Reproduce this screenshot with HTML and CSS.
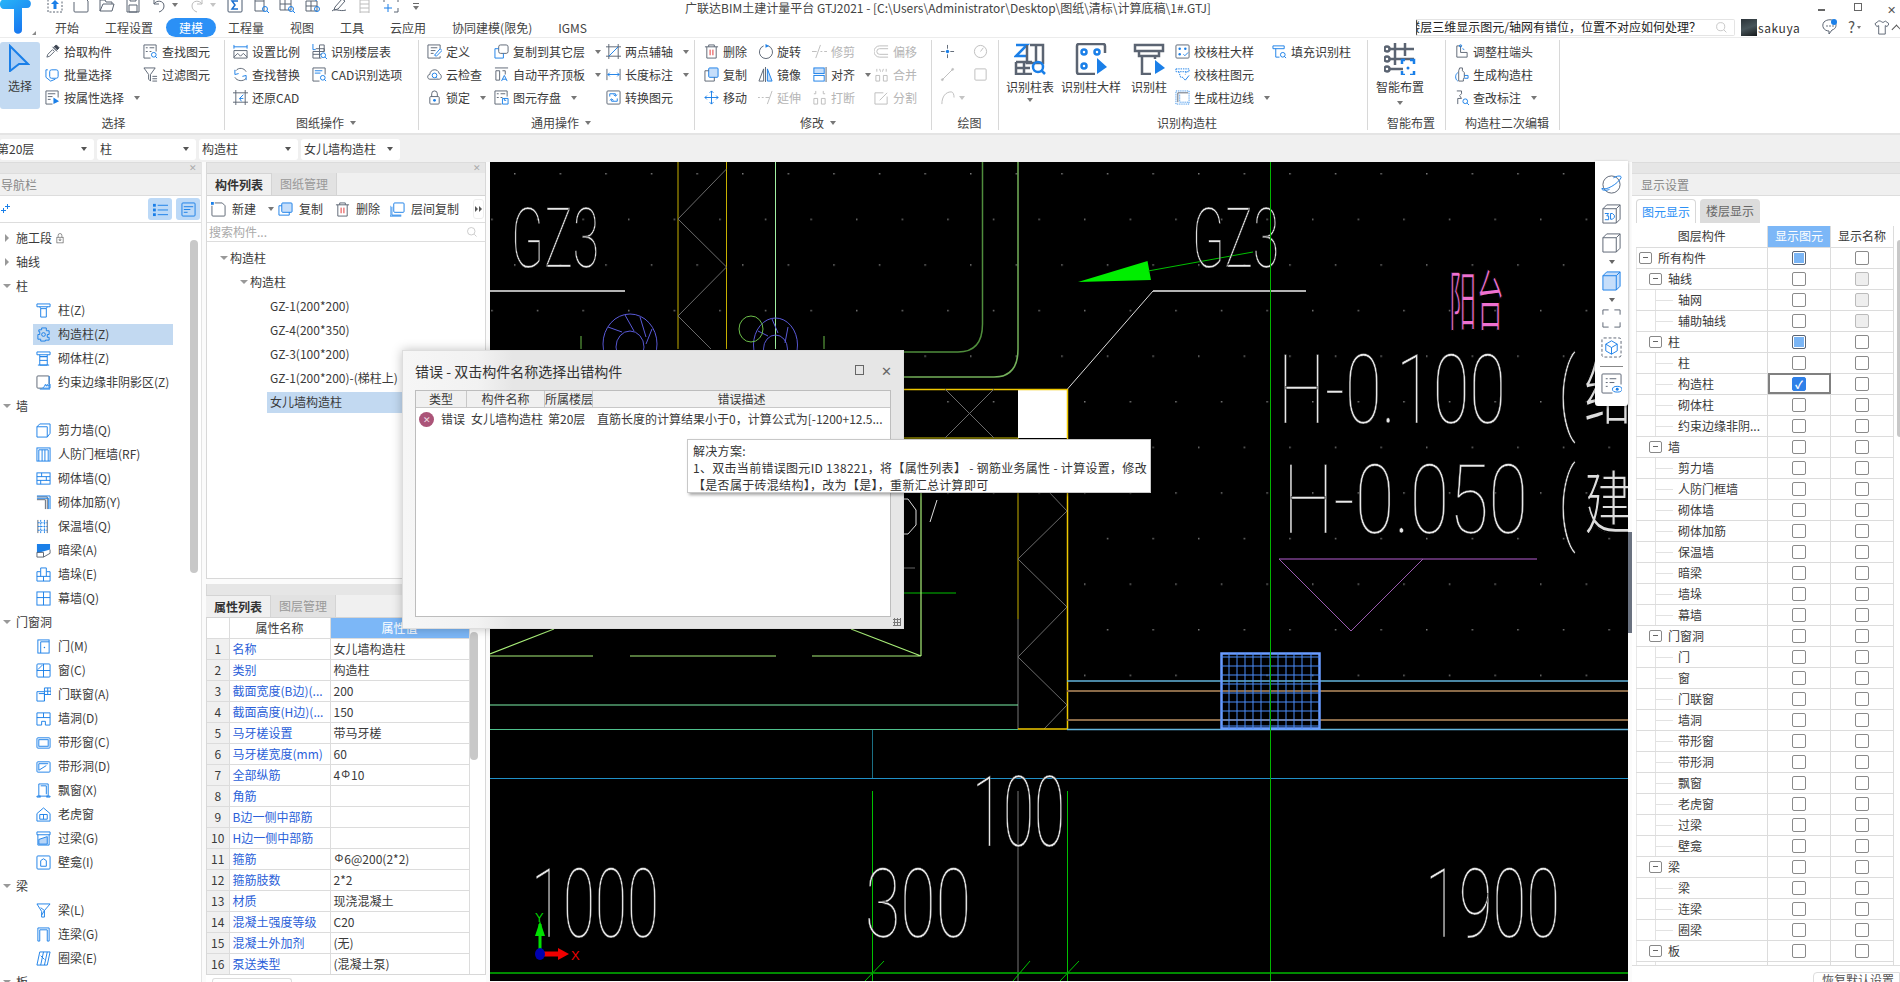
FILE: index.html
```html
<!DOCTYPE html>
<html lang="zh-CN">
<head>
<meta charset="utf-8">
<title>广联达BIM土建计量平台 GTJ2021</title>
<link rel="stylesheet" href="styles.css">
</head>
<body>
<svg class="sprite" xmlns="http://www.w3.org/2000/svg">
<defs><linearGradient id="lg-logo" x1="0" y1="0" x2="0.600" y2="1"><stop class="st1" offset="0"/><stop class="st2" offset="1"/></linearGradient></defs>
<symbol id="q-imp" viewBox="0 0 16 16"><path d="M1 1h14v14H1z" stroke-dasharray="2 1.5"/><path class="bf" d="M8 3l4 4H9.500v5h-3V7H4z"/></symbol>
<symbol id="q-new" viewBox="0 0 16 16"><path d="M5 1h7l3 3v10a1 1 0 0 1-1 1H2a1 1 0 0 1-1-1V5"/><path class="bf" d="M1 0h3v3H1z"/></symbol>
<symbol id="q-open" viewBox="0 0 16 16"><path d="M1 14V3h5l1 2h6v2M1 14l3-7h11l-2 7z"/></symbol>
<symbol id="q-save" viewBox="0 0 16 16"><path d="M2 1h12v14H2zM5 1v3h6V1M4 8h8v7H4z"/></symbol>
<symbol id="q-undo" viewBox="0 0 16 16"><path d="M3 2v5h5M3 7c2-4 10-4 10 2 0 3-2 5-5 6"/></symbol>
<symbol id="q-redo" viewBox="0 0 16 16"><path class="g" d="M13 2v5H8M13 7C11 3 3 3 3 9c0 3 2 5 5 6"/></symbol>
<symbol id="q-sum" viewBox="0 0 16 16"><rect class="ds" x="1" y="1" width="14" height="14" rx="1"/><path class="dbs" d="M11 4H5l3 4-3 4h6"/></symbol>
<symbol id="q-tb1" viewBox="0 0 16 16"><path d="M2 1h9v13H2zM2 4h9"/><path class="b" d="M3 2.500h7"/><circle class="b" cx="12" cy="12" r="2.500"/><path class="b" d="M14 14l2 2"/></symbol>
<symbol id="q-tb2" viewBox="0 0 16 16"><path d="M1 2h11v11H1zM1 7h11M6 2v11"/><circle class="b" cx="12" cy="12" r="2.500"/><path class="b" d="M14 14l2 2"/></symbol>
<symbol id="q-tb3" viewBox="0 0 16 16"><path d="M1 4h11v10H1zM1 9h11M6 4v10"/><path class="b" d="M5 1h6v3"/><circle class="b" cx="12" cy="12" r="2.500"/></symbol>
<symbol id="q-pen" viewBox="0 0 16 16"><path d="M1 14c3-3 8 1 14-1M4 10l7-8 3 2-7 8-4 1z"/></symbol>
<symbol id="q-lad" viewBox="0 0 16 16"><path class="g" d="M3 0v16M12 0v16M3 3h9M3 7h9M3 11h9M3 15h9"/></symbol>
<symbol id="q-scan" viewBox="0 0 16 16"><path d="M1 5V1h4M11 1h4v4M15 11v4h-4"/><path class="b" d="M1 11h8M5 7v8"/></symbol>

<symbol id="r-pick" viewBox="0 0 16 16"><path d="M2 14l1-3 5-5 2 2-5 5zM8 3l5 5M11 2l3 3-2 2-3-3z"/><path class="k" d="M10 3l2-2 3 3-2 2z"/></symbol>
<symbol id="r-batch" viewBox="0 0 16 16"><rect class="b" x="5" y="3" width="9" height="9" rx="2"/><path class="b" d="M3 3H1v8l5 4 5-2"/></symbol>
<symbol id="r-attr" viewBox="0 0 16 16"><path d="M14 8V1H1v14h7M3 4h8M3 7h5M3 10h3"/><path class="bf" d="M9 8l6 4-6 3z"/></symbol>
<symbol id="r-find" viewBox="0 0 16 16"><path d="M14 8V1H1v14h7M3 4h2M7 4h5M3 8h2M7 8h2"/><circle class="b" cx="11.500" cy="11.500" r="2.500"/><path class="b" d="M13 13l2 2"/></symbol>
<symbol id="r-filter" viewBox="0 0 16 16"><path d="M1 1h12L8 8v7l-2-2V8zM10 10h5M10 12.500h5M10 15h5"/></symbol>
<symbol id="r-scale" viewBox="0 0 16 16"><path class="b" d="M1 1v4M15 1v4M1 3h14"/><path d="M1 7h14v8H1zM1 14l4-4 3 3 3-3 4 4"/></symbol>
<symbol id="r-floor" viewBox="0 0 16 16"><path class="b" d="M1 0v6h3"/><path d="M4 5h9v3H1v7h9M8 1h5v7M8 1v14M1 11h9"/><circle class="b" cx="12" cy="12" r="2.500"/><path class="b" d="M14 14l2 2"/></symbol>
<symbol id="r-rep" viewBox="0 0 16 16"><path d="M3 4C6 0 12 1 14 5M2 11c2 4 9 5 12 1"/><path class="b" d="M2 3v5l4-1M14 14v-5l-4 1"/></symbol>
<symbol id="r-cad" viewBox="0 0 16 16"><path d="M14 8V1H1v14h7"/><path class="b" d="M3 4h8M3 6.500h6"/><circle class="b" cx="11.500" cy="11.500" r="2.500"/><path class="b" d="M13 13l2 2"/></symbol>
<symbol id="r-res" viewBox="0 0 16 16"><path d="M3 0v16M13 0v16M0 3h16M0 13h16"/><path class="b" d="M11 5L7 9h4M7 9l2 3"/></symbol>
<symbol id="r-def" viewBox="0 0 16 16"><path d="M14 5V1H1v14h13v-2M4 4h7M4 7h5M4 10h3"/><path class="b" d="M8 12l6-7 2 2-6 6z"/></symbol>
<symbol id="r-cloud" viewBox="0 0 16 16"><path d="M3 13c-3 0-3-5 0-5 0-6 9-7 10-1 3 1 3 6 0 6z"/><circle class="b" cx="8" cy="9" r="2.500"/><path class="b" d="M10 11l1 1"/></symbol>
<symbol id="r-lock" viewBox="0 0 16 16"><path d="M5 7V4a3 3 0 0 1 6 0v3"/><rect x="3" y="7" width="10" height="8" rx="1"/><circle class="bf" cx="8" cy="11" r="1.500"/></symbol>
<symbol id="r-cpy" viewBox="0 0 16 16"><rect x="5" y="1" width="10" height="9" rx="2"/><path class="b" d="M5 5H1v10h9v-5"/></symbol>
<symbol id="r-alg" viewBox="0 0 16 16"><path d="M1 1h14M2 4h4v10H2zM9 4h3v4"/><path class="b" d="M8 15l3-6 3 6M9 13h4"/></symbol>
<symbol id="r-sav" viewBox="0 0 16 16"><path d="M14 7V1H1v14h7M3 4h2M7 4h5M3 8h2M7 8h2"/><path class="b" d="M9 9h6v6H9zM11 9v2h2"/></symbol>
<symbol id="r-2pt" viewBox="0 0 16 16"><path d="M3 0v16M13 0v16M0 3h16M0 13h16"/><path class="b" d="M3 13L13 3"/></symbol>
<symbol id="r-len" viewBox="0 0 16 16"><path d="M1 2v12M15 2v12"/><path class="b" d="M2 8h12M4 6L2 8l2 2M12 6l2 2-2 2"/></symbol>
<symbol id="r-conv" viewBox="0 0 16 16"><rect x="1" y="1" width="14" height="14" rx="1"/><path class="b" d="M4 7V4h6v2M12 9v3H6v-2M8 5l2 1.500L12 5M4 11l2-1.500L8 11"/></symbol>
<symbol id="r-del" viewBox="0 0 16 16"><path d="M1 3h14M5 3V1h6v2M3 3v12h10V3"/><path class="r" d="M6.500 6v6M9.500 6v6"/></symbol>
<symbol id="r-copy" viewBox="0 0 16 16"><rect class="b lf" x="5" y="1" width="10" height="10" rx="1"/><path d="M5 4H1v11h10v-4"/></symbol>
<symbol id="r-move" viewBox="0 0 16 16"><path class="b" d="M8 1v14M1 8h14M6 3l2-2 2 2M6 13l2 2 2-2M3 6L1 8l2 2M13 6l2 2-2 2"/></symbol>
<symbol id="r-rot" viewBox="0 0 16 16"><path d="M6 2a7 7 0 1 0 5 0"/><path class="bf" d="M8 0l4 2-4 2z"/></symbol>
<symbol id="r-mir" viewBox="0 0 16 16"><path d="M8 0v16M6 2L1 15h5z"/><path class="b lf" d="M10 2l5 13h-5z"/></symbol>
<symbol id="r-ali" viewBox="0 0 16 16"><rect class="b lf" x="2" y="1" width="11" height="6"/><rect class="b" x="2" y="9" width="11" height="6"/><path d="M15 0v16"/></symbol>
<symbol id="r-trim" viewBox="0 0 16 16"><path class="g" d="M4 15L9 1M0 8h5M9 8h2M13 8h3"/></symbol>
<symbol id="r-ext" viewBox="0 0 16 16"><path class="g" d="M0 8h2M4 8h2M8 8h4M10 15l5-14"/></symbol>
<symbol id="r-brk" viewBox="0 0 16 16"><path class="g" d="M2 9h4v6H2zM10 9h4v6h-4zM4 1v3M12 1v3M2 4h2M12 4h2"/></symbol>
<symbol id="r-off" viewBox="0 0 16 16"><path class="g" d="M15 2H6a6 6 0 0 0 0 12h9M15 5H6a3 3 0 0 0 0 6h9"/></symbol>
<symbol id="r-mrg" viewBox="0 0 16 16"><path class="g" d="M2 9h4v6H2zM10 9h4v6h-4zM3 2v3M13 2v3M6 2l1 3M10 2L9 5"/></symbol>
<symbol id="r-spl" viewBox="0 0 16 16"><path class="g" d="M10 3H1v12h13V7M6 11l8-8"/></symbol>
<symbol id="r-pt" viewBox="0 0 16 16"><path d="M8 1v4M8 11v4M1 8h4M11 8h4"/><circle class="bf" cx="8" cy="8" r="1.800"/></symbol>
<symbol id="r-clk" viewBox="0 0 16 16"><circle class="g" cx="8" cy="8" r="6.500"/><path class="g" d="M8 8l3-4"/></symbol>
<symbol id="r-ln" viewBox="0 0 16 16"><path class="g" d="M2 14L14 2"/><circle class="g" cx="2.500" cy="13.500" r="1"/><circle class="g" cx="13.500" cy="2.500" r="1"/></symbol>
<symbol id="r-sq" viewBox="0 0 16 16"><rect class="g" x="2" y="2" width="12" height="12" rx="1"/></symbol>
<symbol id="r-arc" viewBox="0 0 16 16"><path class="g" d="M2 15C2 7 6 2 12 2c2 0 3 3 3 6"/></symbol>
<symbol id="r-chk" viewBox="0 0 16 16"><rect x="1" y="1" width="14" height="14" rx="1"/><g class="bf"><circle cx="5" cy="5" r="1.300"/><circle cx="11" cy="5" r="1.300"/><circle cx="5" cy="11" r="1.300"/></g><path class="b" d="M9 11l1.500 1.500L14 9"/></symbol>
<symbol id="r-cel" viewBox="0 0 16 16"><path class="b" d="M1 2h14v3H1zM4 5l2 6h3M12 5l-1 3" stroke-dasharray="1.500 1"/><path class="b" d="M9 12l2 2 4-5"/></symbol>
<symbol id="r-edg" viewBox="0 0 16 16"><path d="M3 3h11M3 3v10"/><path class="b" d="M1 1h14v14H1z" stroke-dasharray="1 1"/><path class="b" d="M5 13h10M5 5v8" stroke-dasharray="1 1"/></symbol>
<symbol id="r-fil" viewBox="0 0 16 16"><path class="b" d="M1 2h12v3H1zM4 5v9h4"/><circle class="b" cx="11.500" cy="11.500" r="2.500"/><path class="b" d="M13 13l2 2"/></symbol>
<symbol id="r-adj" viewBox="0 0 16 16"><path d="M3 14V2h4v7h7v5z"/><circle class="b" cx="7" cy="2" r="1.200"/><path class="b" d="M9 5l2 1"/></symbol>
<symbol id="r-gen" viewBox="0 0 16 16"><path d="M6 1h3v3l2 2v5l-1 2v2H5V4z"/><path class="b" d="M4 6c-3 2-3 7 0 9M11 9h4v3h-4"/></symbol>
<symbol id="r-lbl" viewBox="0 0 16 16"><path d="M3 1h5v3L6 6l2 3H4v6"/><circle class="b" cx="12" cy="12" r="2.500"/><path class="b" d="M14 14l2 2"/></symbol>

<symbol id="b-tab" viewBox="0 0 32 32"><path class="bw" d="M2 2h11L2 13h11" /><g class="bg"><path d="M16 2h13v18H13V2M22 2v18M2 19h16M2 19v12h16M10 19v12M2 25h14"/></g><circle class="bw" cx="24" cy="24" r="5"/><path class="bw" d="M27 27l4 4"/></symbol>
<symbol id="b-det" viewBox="0 0 32 32"><path class="bg" d="M30 10V3a2 2 0 0 0-2-2H4a2 2 0 0 0-2 2v26a2 2 0 0 0 2 2h16"/><g class="bw"><circle cx="9" cy="9" r="2.500"/><circle cx="22" cy="9" r="2.500"/><circle cx="9" cy="23" r="2.500"/></g><path class="bf" d="M22 15l10 9-10 7z"/></symbol>
<symbol id="b-col" viewBox="0 0 32 32"><path class="bg" d="M2 2h28v6H2zM6 8v5h20V8M9 13v18h9M22 13v3"/><path class="bf" d="M22 17l10 8-10 6z"/></symbol>
<symbol id="b-smart" viewBox="0 0 32 32"><g class="bg"><path d="M11 0v22M21 0v13M6 6h24M6 16h24M6 26h13"/><circle cx="3" cy="6" r="2.500"/><circle cx="3" cy="16" r="2.500"/><circle cx="3" cy="26" r="2.500"/></g><path class="bw" d="M21 17h-3v4M30 21v-4h-4M26 32h4v-4M18 28v4h3"/><circle class="bf" cx="24" cy="25" r="1.500"/></symbol>
<symbol id="b-sel" viewBox="0 0 22 28"><path class="cur" d="M2 2l18 18-9 0-9 7z"/></symbol>

<symbol id="n-col" viewBox="0 0 16 16"><path class="b" d="M1 1h14v3H1zM4 4l1 2h6l1-2M5 6v9h6V6"/></symbol>
<symbol id="n-gz" viewBox="0 0 16 16"><path class="b" d="M6 1h5v3h3v4h-2v3h2v3h-4v1H5v-2H2V8h2V5H3V3h3z"/><circle class="b" cx="8" cy="8" r="2"/></symbol>
<symbol id="n-zt" viewBox="0 0 16 16"><path class="b" d="M1 1h14v3H1zM4 4v2h8V4M4 6h8v9H4zM4 10h8M2 15h12"/></symbol>
<symbol id="n-ys" viewBox="0 0 16 16"><path d="M14 10V2a1 1 0 0 0-1-1H2a1 1 0 0 0-1 1v11a1 1 0 0 0 1 1h5"/><path class="b" d="M7 14h8v-4l-2 2-1-2-1 2-1-2-1 2z M14 1v13M4 15h11"/></symbol>
<symbol id="n-jl" viewBox="0 0 16 16"><path class="b" d="M1 4h11v11H1zM1 4l3-3h11v10l-3 4"/></symbol>
<symbol id="n-rf" viewBox="0 0 16 16"><rect class="b" x="1" y="1" width="14" height="14"/><path class="b" d="M3 3h10v12M3 3v12M6.500 3v12M9.500 3v12"/></symbol>
<symbol id="n-qq" viewBox="0 0 16 16"><rect class="b" x="1" y="2" width="14" height="12"/><path class="b" d="M1 6h14M1 10h14M6 2v4M11 6v4M5 10v4"/></symbol>
<symbol id="n-mq" viewBox="0 0 16 16"><rect class="b" x="1" y="1" width="14" height="14"/><path class="b" d="M1 7h14M8 1v14"/></symbol>
<symbol id="n-jj" viewBox="0 0 16 16"><path d="M1 5h9M10 5v10M1 2h11v13"/><path class="b" d="M1 3.500h12.500V15M15 1v14M1 1h14"/></symbol>
<symbol id="n-bw" viewBox="0 0 16 16"><path d="M2 1v14M12 1v14"/><path class="b" d="M5 1v14M9 1v14M2 4h10M2 8h10M2 12h10" stroke-dasharray="2 1"/></symbol>
<symbol id="n-al" viewBox="0 0 16 16"><path class="bf" d="M1 1h14v6L1 11z"/><path d="M1 10h7v5H1zM8 15l7-4V7"/></symbol>
<symbol id="n-qd" viewBox="0 0 16 16"><path class="b" d="M1 5h4V1h6v4h4v10H1zM5 5v5M11 5v5M1 10h14M8 10v5"/></symbol>
<symbol id="n-door" viewBox="0 0 16 16"><rect class="b" x="2" y="1" width="12" height="14"/><path class="b" d="M5 3h9M5 3v12"/><circle class="bf" cx="9" cy="9" r=".8"/></symbol>
<symbol id="n-win" viewBox="0 0 16 16"><rect class="b" x="1" y="1" width="14" height="14" rx="1"/><path class="b" d="M1 8h14M8 1v14M2 7l5-5"/></symbol>
<symbol id="n-lc" viewBox="0 0 16 16"><path class="b" d="M1 5h8v10H1zM3 7h6v8M9 5V1h7v7H9M12.500 1v7M9 4.500h7"/></symbol>
<symbol id="n-qdg" viewBox="0 0 16 16"><path class="b" d="M1 15V2h14v13h-5v-4H6v4zM1 7h14M8 2v5"/></symbol>
<symbol id="n-dxc" viewBox="0 0 16 16"><rect class="b" x="1" y="3" width="14" height="11" rx="1"/><rect class="b" x="3" y="5" width="10" height="7"/></symbol>
<symbol id="n-dxd" viewBox="0 0 16 16"><rect class="b" x="1" y="3" width="14" height="11" rx="1"/><path class="b" d="M3 12V5h10M3 12l8-5"/></symbol>
<symbol id="n-pc" viewBox="0 0 16 16"><path class="b" d="M3 1h10v13H3zM1 14h4M11 14h4M1 14v1h4M11 15h4v-1M5 3h6v9"/></symbol>
<symbol id="n-lh" viewBox="0 0 16 16"><path class="b" d="M8 1l7 6v8H1V7zM4 8h8v5H4zM8 8v5"/></symbol>
<symbol id="n-gl" viewBox="0 0 16 16"><path class="b" d="M1 1h14v3H1zM2 4v11h12V4"/><path class="bl" d="M3 14V9l9-3v8z"/></symbol>
<symbol id="n-bk" viewBox="0 0 16 16"><rect class="b" x="1" y="1" width="14" height="14" rx="1"/><path class="b" d="M5 12V6l3-2 3 2v6z"/></symbol>
<symbol id="n-l" viewBox="0 0 16 16"><path class="b" d="M1 1l14 0-6 7v7H6V9L1 1M5 5l4 3M6 13l3-5"/></symbol>
<symbol id="n-ll" viewBox="0 0 16 16"><path class="b" d="M2 15V1h12v14h-2V3H4v12z"/></symbol>
<symbol id="n-ql" viewBox="0 0 16 16"><path class="b" d="M4 1h11l-3 14H1zM5 5l4 4M8 1L5 15M12 1L9 15"/></symbol>

<symbol id="t-pin" viewBox="0 0 10 10"><path class="b" d="M6.500 0v5M4 2.500h5M2.500 4v5M0 6.500h5"/></symbol>
<symbol id="t-new" viewBox="0 0 16 16"><path d="M4 1h8l3 3v10a1 1 0 0 1-1 1H2a1 1 0 0 1-1-1V4"/><path class="bf" d="M0 0h3v3H0z"/></symbol>
<symbol id="t-cp2" viewBox="0 0 16 16"><rect class="b lf" x="4" y="1" width="11" height="10" rx="1"/><path class="b" d="M4 4H1v10h11v-3"/></symbol>
<symbol id="t-fl" viewBox="0 0 16 16"><rect class="b" x="4" y="1" width="11" height="10" rx="1"/><path class="b" d="M2 5v9h10M0 4v11h12"/></symbol>
<symbol id="t-list" viewBox="0 0 16 16"><g class="bf"><rect x="0" y="2" width="3" height="3"/><rect x="0" y="7" width="3" height="3"/><rect x="0" y="12" width="3" height="3"/></g><path class="b" d="M5 3.500h11M5 8.500h11M5 13.500h11"/></symbol>
<symbol id="t-det" viewBox="0 0 16 16"><rect class="b" x="1" y="1" width="14" height="14" rx="1"/><path class="b" d="M3 5h10M3 8h7M3 11h4"/></symbol>
<symbol id="s-glob" viewBox="0 0 22 22"><ellipse cx="11" cy="11" rx="9" ry="9"/><path class="b" d="M1 15C5 18 18 10 21 4c1-3-5-2-8 0M1 15c-1 2 4 3 8 1"/></symbol>
<symbol id="s-3d" viewBox="0 0 22 22"><path d="M2 6l4-4h14v15l-4 4H2zM2 6h14v15M16 6l4-4"/><path class="b" d="M4 11h4l-2 2.500h2v4H4M10 11h2l2 2v2l-2 2h-2z"/></symbol>
<symbol id="s-box" viewBox="0 0 22 22"><path d="M2 6l4-4h14v15l-4 4H2zM2 6h14v15M16 6l4-4"/></symbol>
<symbol id="s-boxb" viewBox="0 0 22 22"><path class="b lf" d="M2 6l4-4h14v15l-4 4H2z"/><path class="b" d="M2 6h14v15M16 6l4-4"/></symbol>
<symbol id="s-fr" viewBox="0 0 22 22"><path d="M2 7V2h6M14 2h6v5M20 15v5h-6M8 20H2v-5"/></symbol>
<symbol id="s-cube" viewBox="0 0 22 22"><rect x="1" y="1" width="20" height="20" rx="2" stroke-dasharray="3 2"/><path class="b" d="M11 4l6 3.500v7L11 18l-6-3.500v-7zM5 7.500L11 11l6-3.500M11 11v7"/></symbol>
<symbol id="s-eye" viewBox="0 0 22 22"><path d="M21 12V2a1 1 0 0 0-1-1H2a1 1 0 0 0-1 1v18a1 1 0 0 0 1 1h10M5 6h2M9 6h7M5 10h2M9 10h5M5 14h2"/><ellipse class="b" cx="17" cy="17" rx="5" ry="3"/><circle class="bf" cx="17" cy="17" r="1.500"/></symbol>
<symbol id="h-chat" viewBox="0 0 16 16"><path d="M2 3c3-3 9-3 11 0 2 3 1 7-3 8l-3 4v-3C2 12-1 7 2 3z"/><circle class="bf" cx="12" cy="3" r="3"/><g class="bfd"><circle cx="5" cy="7" r=".8"/><circle cx="8" cy="7" r=".8"/><circle cx="11" cy="7" r=".8"/></g></symbol>
<symbol id="h-shirt" viewBox="0 0 16 16"><path d="M5 1L1 4l2 3 2-1v9h7V6l2 1 2-3-4-3c-1 2-4 2-5 0z"/></symbol>
<symbol id="m-search" viewBox="0 0 16 16"><circle class="g" cx="7" cy="7" r="5"/><path class="g" d="M11 11l3 3"/></symbol>
<symbol id="m-lock" viewBox="0 0 16 16"><path d="M5 6V3a3 3 0 0 1 6 0v3"/><rect x="3" y="6" width="10" height="9"/><circle cx="8" cy="10" r="1.500"/></symbol>
</svg>

<div class="app">
  <header class="head">
    <div class="logo">
      <svg class="logo-svg" viewBox="0 0 42 38"><path class="logo-t" d="M2 0h26c4 0 4 8-1 8h-5v22c0 5-8 5-8 0V9H4C-1 9-1 1 2 0z"/><path class="logo-c" d="M36 31l-4 4h4z"/></svg>
    </div>
    <div class="head-main">
      <div class="qa">
        <div class="qa-icons">
          <svg class="ic"><use href="#q-imp"/></svg>
          <svg class="ic"><use href="#q-new"/></svg>
          <svg class="ic"><use href="#q-open"/></svg>
          <svg class="ic"><use href="#q-save"/></svg>
          <span class="qa-pair"><svg class="ic"><use href="#q-undo"/></svg><i class="car"></i></span>
          <span class="qa-pair"><svg class="ic"><use href="#q-redo"/></svg><i class="car lt"></i></span>
          <svg class="ic"><use href="#q-sum"/></svg>
          <svg class="ic"><use href="#q-tb1"/></svg>
          <svg class="ic"><use href="#q-tb2"/></svg>
          <svg class="ic"><use href="#q-tb3"/></svg>
          <svg class="ic"><use href="#q-pen"/></svg>
          <svg class="ic"><use href="#q-lad"/></svg>
          <svg class="ic"><use href="#q-scan"/></svg>
          <span class="qa-more"><b></b><i class="car"></i></span>
        </div>
        <div class="title">广联达BIM土建计量平台 GTJ2021 - [C:\Users\Administrator\Desktop\图纸\清标\计算底稿\1#.GTJ]</div>
        <div class="win"><span class="w-min"></span><span class="w-res"></span><span class="w-x">✕</span></div>
      </div>
      <div class="tabbar">
        <nav class="tabs">
          <a>开始</a><a>工程设置</a><a class="on">建模</a><a>工程量</a><a>视图</a><a>工具</a><a>云应用</a><a>协同建模(限免)</a><a>IGMS</a>
        </nav>
        <div class="hsearch"><span class="hs-text">楼层三维显示图元/轴网有错位，位置不对应如何处理？</span><svg class="ic hs-ic"><use href="#m-search"/></svg></div>
        <div class="avatar"></div>
        <span class="user">sakuya</span>
        <svg class="ic h-i"><use href="#h-chat"/></svg>
        <span class="help">?<i class="car"></i></span>
        <svg class="ic h-s"><use href="#h-shirt"/></svg>
        <span class="collapse"></span>
      </div>
    </div>
  </header>

  <div class="ribbon">
    <section class="rg g1">
      <div class="rb">
        <div class="bigsel"><svg class="ic-sel"><use href="#b-sel"/></svg><span>选择</span></div>
        <div class="col c98">
          <div class="ri"><svg class="ic"><use href="#r-pick"/></svg>拾取构件</div>
          <div class="ri"><svg class="ic"><use href="#r-batch"/></svg>批量选择</div>
          <div class="ri"><svg class="ic"><use href="#r-attr"/></svg>按属性选择<i class="car m5"></i></div>
        </div>
        <div class="col">
          <div class="ri"><svg class="ic"><use href="#r-find"/></svg>查找图元</div>
          <div class="ri"><svg class="ic"><use href="#r-filter"/></svg>过滤图元</div>
        </div>
      </div>
      <div class="rl">选择</div>
    </section>
    <section class="rg g2">
      <div class="rb">
        <div class="col c79">
          <div class="ri"><svg class="ic"><use href="#r-scale"/></svg>设置比例</div>
          <div class="ri"><svg class="ic"><use href="#r-rep"/></svg>查找替换</div>
          <div class="ri"><svg class="ic"><use href="#r-res"/></svg>还原CAD</div>
        </div>
        <div class="col">
          <div class="ri"><svg class="ic"><use href="#r-floor"/></svg>识别楼层表</div>
          <div class="ri"><svg class="ic"><use href="#r-cad"/></svg>CAD识别选项</div>
        </div>
      </div>
      <div class="rl">图纸操作<i class="car m5"></i></div>
    </section>
    <section class="rg g3">
      <div class="rb">
        <div class="col c67">
          <div class="ri"><svg class="ic"><use href="#r-def"/></svg>定义</div>
          <div class="ri"><svg class="ic"><use href="#r-cloud"/></svg>云检查</div>
          <div class="ri"><svg class="ic"><use href="#r-lock"/></svg>锁定<i class="car m5"></i></div>
        </div>
        <div class="col c112">
          <div class="ri"><svg class="ic"><use href="#r-cpy"/></svg>复制到其它层<i class="car m5"></i></div>
          <div class="ri"><svg class="ic"><use href="#r-alg"/></svg>自动平齐顶板<i class="car m5"></i></div>
          <div class="ri"><svg class="ic"><use href="#r-sav"/></svg>图元存盘<i class="car m5"></i></div>
        </div>
        <div class="col">
          <div class="ri"><svg class="ic"><use href="#r-2pt"/></svg>两点辅轴<i class="car m5"></i></div>
          <div class="ri"><svg class="ic"><use href="#r-len"/></svg>长度标注<i class="car m5"></i></div>
          <div class="ri"><svg class="ic"><use href="#r-conv"/></svg>转换图元</div>
        </div>
      </div>
      <div class="rl">通用操作<i class="car m5"></i></div>
    </section>
    <section class="rg g4">
      <div class="rb">
        <div class="col c54">
          <div class="ri"><svg class="ic"><use href="#r-del"/></svg>删除</div>
          <div class="ri"><svg class="ic"><use href="#r-copy"/></svg>复制</div>
          <div class="ri"><svg class="ic"><use href="#r-move"/></svg>移动</div>
        </div>
        <div class="col c54">
          <div class="ri"><svg class="ic"><use href="#r-rot"/></svg>旋转</div>
          <div class="ri"><svg class="ic"><use href="#r-mir"/></svg>镜像</div>
          <div class="ri dim"><svg class="ic"><use href="#r-ext"/></svg>延伸</div>
        </div>
        <div class="col c62">
          <div class="ri dim"><svg class="ic"><use href="#r-trim"/></svg>修剪</div>
          <div class="ri"><svg class="ic"><use href="#r-ali"/></svg>对齐<i class="car m5"></i></div>
          <div class="ri dim"><svg class="ic"><use href="#r-brk"/></svg>打断</div>
        </div>
        <div class="col">
          <div class="ri dim"><svg class="ic"><use href="#r-off"/></svg>偏移</div>
          <div class="ri dim"><svg class="ic"><use href="#r-mrg"/></svg>合并</div>
          <div class="ri dim"><svg class="ic"><use href="#r-spl"/></svg>分割</div>
        </div>
      </div>
      <div class="rl">修改<i class="car m5"></i></div>
    </section>
    <section class="rg g5">
      <div class="rb">
        <div class="col c33">
          <div class="ri"><svg class="ic"><use href="#r-pt"/></svg></div>
          <div class="ri"><svg class="ic"><use href="#r-ln"/></svg></div>
          <div class="ri"><svg class="ic"><use href="#r-arc"/></svg><i class="car lt"></i></div>
        </div>
        <div class="col">
          <div class="ri"><svg class="ic"><use href="#r-clk"/></svg></div>
          <div class="ri"><svg class="ic"><use href="#r-sq"/></svg></div>
        </div>
      </div>
      <div class="rl">绘图</div>
    </section>
    <section class="rg g6">
      <div class="rb">
        <div class="bigb w48"><svg class="ic32"><use href="#b-tab"/></svg><span>识别柱表</span><i class="car"></i></div>
        <div class="bigb w60"><svg class="ic32"><use href="#b-det"/></svg><span>识别柱大样</span></div>
        <div class="bigb w36"><svg class="ic32"><use href="#b-col"/></svg><span>识别柱</span></div>
        <div class="col c97">
          <div class="ri"><svg class="ic"><use href="#r-chk"/></svg>校核柱大样</div>
          <div class="ri"><svg class="ic"><use href="#r-cel"/></svg>校核柱图元</div>
          <div class="ri"><svg class="ic"><use href="#r-edg"/></svg>生成柱边线<i class="car m5"></i></div>
        </div>
        <div class="col">
          <div class="ri"><svg class="ic"><use href="#r-fil"/></svg>填充识别柱</div>
        </div>
      </div>
      <div class="rl">识别构造柱</div>
    </section>
    <section class="rg g7">
      <div class="rb">
        <div class="bigb w48"><svg class="ic32"><use href="#b-smart"/></svg><span>智能布置</span><i class="car low"></i></div>
      </div>
      <div class="rl">智能布置</div>
    </section>
    <section class="rg g8">
      <div class="rb">
        <div class="col">
          <div class="ri"><svg class="ic"><use href="#r-adj"/></svg>调整柱端头</div>
          <div class="ri"><svg class="ic"><use href="#r-gen"/></svg>生成构造柱</div>
          <div class="ri"><svg class="ic"><use href="#r-lbl"/></svg>查改标注<i class="car m5"></i></div>
        </div>
      </div>
      <div class="rl">构造柱二次编辑</div>
    </section>
  </div>

  <div class="selbar">
    <div class="sel s1"><span>第20层</span><i class="car"></i></div>
    <div class="sel s2"><span>柱</span><i class="car"></i></div>
    <div class="sel s2"><span>构造柱</span><i class="car"></i></div>
    <div class="sel s2"><span>女儿墙构造柱</span><i class="car"></i></div>
  </div>

  <main class="main">
    <aside class="nav">
      <div class="strip"><span class="sx">✕</span></div>
      <div class="ptitle">导航栏</div>
      <div class="ntool">
        <svg class="ic pin"><use href="#t-pin"/></svg>
        <span class="ntb"><svg class="ic"><use href="#t-list"/></svg></span>
        <span class="ntb"><svg class="ic"><use href="#t-det"/></svg></span>
      </div>
      <div class="ntree">
        <div class="ng"><i class="tri r"></i>施工段<svg class="ic lk"><use href="#m-lock"/></svg></div>
        <div class="ng"><i class="tri r"></i>轴线</div>
        <div class="ng"><i class="tri d"></i>柱</div>
        <div class="ni"><svg class="ic"><use href="#n-col"/></svg>柱(Z)</div>
        <div class="ni on"><svg class="ic"><use href="#n-gz"/></svg>构造柱(Z)</div>
        <div class="ni"><svg class="ic"><use href="#n-zt"/></svg>砌体柱(Z)</div>
        <div class="ni"><svg class="ic"><use href="#n-ys"/></svg>约束边缘非阴影区(Z)</div>
        <div class="ng"><i class="tri d"></i>墙</div>
        <div class="ni"><svg class="ic"><use href="#n-jl"/></svg>剪力墙(Q)</div>
        <div class="ni"><svg class="ic"><use href="#n-rf"/></svg>人防门框墙(RF)</div>
        <div class="ni"><svg class="ic"><use href="#n-qq"/></svg>砌体墙(Q)</div>
        <div class="ni"><svg class="ic"><use href="#n-jj"/></svg>砌体加筋(Y)</div>
        <div class="ni"><svg class="ic"><use href="#n-bw"/></svg>保温墙(Q)</div>
        <div class="ni"><svg class="ic"><use href="#n-al"/></svg>暗梁(A)</div>
        <div class="ni"><svg class="ic"><use href="#n-qd"/></svg>墙垛(E)</div>
        <div class="ni"><svg class="ic"><use href="#n-mq"/></svg>幕墙(Q)</div>
        <div class="ng"><i class="tri d"></i>门窗洞</div>
        <div class="ni"><svg class="ic"><use href="#n-door"/></svg>门(M)</div>
        <div class="ni"><svg class="ic"><use href="#n-win"/></svg>窗(C)</div>
        <div class="ni"><svg class="ic"><use href="#n-lc"/></svg>门联窗(A)</div>
        <div class="ni"><svg class="ic"><use href="#n-qdg"/></svg>墙洞(D)</div>
        <div class="ni"><svg class="ic"><use href="#n-dxc"/></svg>带形窗(C)</div>
        <div class="ni"><svg class="ic"><use href="#n-dxd"/></svg>带形洞(D)</div>
        <div class="ni"><svg class="ic"><use href="#n-pc"/></svg>飘窗(X)</div>
        <div class="ni"><svg class="ic"><use href="#n-lh"/></svg>老虎窗</div>
        <div class="ni"><svg class="ic"><use href="#n-gl"/></svg>过梁(G)</div>
        <div class="ni"><svg class="ic"><use href="#n-bk"/></svg>壁龛(I)</div>
        <div class="ng"><i class="tri d"></i>梁</div>
        <div class="ni"><svg class="ic"><use href="#n-l"/></svg>梁(L)</div>
        <div class="ni"><svg class="ic"><use href="#n-ll"/></svg>连梁(G)</div>
        <div class="ni"><svg class="ic"><use href="#n-ql"/></svg>圈梁(E)</div>
        <div class="ng"><i class="tri d"></i>板</div>
        <span class="nscroll"></span>
      </div>
    </aside>

    <section class="mid">
      <div class="mtop">
        <div class="strip"><span class="sx">✕</span></div>
        <div class="ptabs"><a class="on">构件列表</a><a>图纸管理</a></div>
        <div class="mtool">
          <span class="mt n1"><svg class="ic"><use href="#t-new"/></svg>新建<i class="car m5"></i></span>
          <span class="mt n2"><svg class="ic"><use href="#t-cp2"/></svg>复制</span>
          <span class="mt n3"><svg class="ic"><use href="#r-del"/></svg>删除</span>
          <span class="mt n4"><svg class="ic"><use href="#t-fl"/></svg>层间复制</span>
          <span class="more"><i></i><i></i></span>
        </div>
        <div class="msearch"><span>搜索构件...</span><svg class="ic"><use href="#m-search"/></svg></div>
        <div class="mtree">
          <div class="mi l0"><i class="tri d"></i>构造柱</div>
          <div class="mi l1"><i class="tri d"></i>构造柱</div>
          <div class="mi l2">GZ-1(200*200)</div>
          <div class="mi l2">GZ-4(200*350)</div>
          <div class="mi l2">GZ-3(100*200)</div>
          <div class="mi l2">GZ-1(200*200)-(梯柱上)</div>
          <div class="mi l2 on">女儿墙构造柱</div>
        </div>
      </div>
      <div class="mbot">
        <div class="strip"></div>
        <div class="ptabs"><a class="on">属性列表</a><a>图层管理</a></div>
        <div class="ptable-wrap">
          <table class="ptable">
            <colgroup><col class="pc1"><col class="pc2"><col class="pc3"></colgroup>
            <tr class="ph"><th></th><th>属性名称</th><th class="hl">属性值</th></tr>
            <tr><td class="n">1</td><td class="k">名称</td><td>女儿墙构造柱</td></tr>
            <tr><td class="n">2</td><td class="k">类别</td><td>构造柱</td></tr>
            <tr><td class="n">3</td><td class="k">截面宽度(B边)(...</td><td>200</td></tr>
            <tr><td class="n">4</td><td class="k">截面高度(H边)(...</td><td>150</td></tr>
            <tr><td class="n">5</td><td class="k">马牙槎设置</td><td>带马牙槎</td></tr>
            <tr><td class="n">6</td><td class="k">马牙槎宽度(mm)</td><td>60</td></tr>
            <tr><td class="n">7</td><td class="k">全部纵筋</td><td>4<span class="phi">Φ</span>10</td></tr>
            <tr><td class="n">8</td><td class="k">角筋</td><td></td></tr>
            <tr><td class="n">9</td><td class="k">B边一侧中部筋</td><td></td></tr>
            <tr><td class="n">10</td><td class="k">H边一侧中部筋</td><td></td></tr>
            <tr><td class="n">11</td><td class="k">箍筋</td><td><span class="phi">Φ</span>6@200(2*2)</td></tr>
            <tr><td class="n">12</td><td class="k">箍筋肢数</td><td>2*2</td></tr>
            <tr><td class="n">13</td><td class="k">材质</td><td>现浇混凝土</td></tr>
            <tr><td class="n">14</td><td class="k">混凝土强度等级</td><td>C20</td></tr>
            <tr><td class="n">15</td><td class="k">混凝土外加剂</td><td>(无)</td></tr>
            <tr><td class="n">16</td><td class="k">泵送类型</td><td>(混凝土泵)</td></tr>
          </table>
          <span class="pscroll"></span>
        </div>
        <div class="mbtn"></div>
      </div>
    </section>

    <section class="canvas">
      <svg class="cad" viewBox="490 163 1138 819" xmlns="http://www.w3.org/2000/svg">
        <defs>
          <pattern id="dots" x="514" y="174" width="45.6" height="91.2" patternUnits="userSpaceOnUse">
            <rect class="dot" x="0" y="0" width="1.500" height="1.500"/>
            <rect class="dot" x="22.800" y="45.600" width="1.500" height="1.500"/>
          </pattern>
        </defs>
        <rect x="490" y="163" width="1138" height="819" class="black"/>
        <path d="M490 163H1628V680H1067V500H490Z" fill="url(#dots)"/>

        <path class="yl" d="M678 163V350M726.500 163V350"/>
        <path class="lg" d="M775.500 163V350"/>
        <path class="zz" d="M726.500 170L678 220L726.500 268L678 317L711 350"/>
        <path class="dg" d="M982.500 163V325Q982.500 353 958 353H904"/>
        <path class="mg" d="M1018 163V350Q1018 378 994 378H904"/>
        <path class="gs" d="M581 337V350M824 337V350"/>
        <g class="rebar">
          <ellipse cx="630" cy="345" rx="27" ry="30"/><ellipse cx="630" cy="348" rx="14" ry="16"/>
          <path d="M608 328L622 333M625 316L634 332M640 318L646 338M652 330L646 345"/>
          <ellipse cx="775.500" cy="346" rx="22" ry="27"/><ellipse cx="775.500" cy="350" rx="12" ry="14"/>
          <path d="M758 332L768 337M772 320L778 334M788 328L785 344"/>
        </g>
        <ellipse class="gs" cx="751" cy="330" rx="12" ry="13"/>

        <path class="wh" d="M490 292H625M1153 292H1306"/>
        <path class="wl" d="M1153 292L1067.500 390"/>
        <path class="arrow" d="M1078 283L1147.500 262L1151 281Z"/>
        <path class="gs2" d="M1148 272L1253 253"/>
        <text class="ct" x="511" y="268" font-size="83" textLength="88" lengthAdjust="spacingAndGlyphs">GZ3</text>
        <text class="ct" x="1192" y="268" font-size="83" textLength="87" lengthAdjust="spacingAndGlyphs">GZ3</text>
        <text class="cc pk" x="1449" y="326" font-size="66" textLength="55" lengthAdjust="spacingAndGlyphs">阳台</text>
        <text class="ct" x="1278" y="424" font-size="97" textLength="228" lengthAdjust="spacingAndGlyphs">H-0.100</text>
        <text class="ct" x="1558" y="424" font-size="90" textLength="18" lengthAdjust="spacingAndGlyphs">(</text>
        <text class="cc" x="1584" y="420" font-size="70" textLength="48" lengthAdjust="spacingAndGlyphs">结</text>
        <text class="ct" x="1283" y="534" font-size="97" textLength="245" lengthAdjust="spacingAndGlyphs">H-0.050</text>
        <text class="ct" x="1558" y="534" font-size="90" textLength="18" lengthAdjust="spacingAndGlyphs">(</text>
        <text class="cc" x="1584" y="530" font-size="70" textLength="48" lengthAdjust="spacingAndGlyphs">建</text>
        <path class="pu" d="M1279 560H1537"/>
        <path class="pu2" d="M1279 560L1351 632L1423 560"/>

        <rect class="wr" x="1018" y="390" width="49.500" height="49"/>
        <path class="yb" d="M904 390.500H1067.500M1067.500 390V730"/>
        <path class="ol" d="M904 439H1018"/>
        <path class="zz" d="M945 390L994 439M994 390L945 439"/>
        <path class="yl" d="M1018 439V620"/>
        <path class="wt" d="M1018 620V730M1018 792V982"/>
        <path class="zz" d="M1049 493L1067 512L1018 560L1067 608L1018 658L1067 706L1044 730"/>
        <path class="wl" d="M904 500H908L916 511V526L908 535H904M937 501L930 523"/>
        <path class="zz" d="M904 569H915"/>
        <path class="gs2" d="M904 594H956"/>
        <path class="lg2" d="M921 493V657M490 657H593M630 657H776M812 657H921M554 630L490 655M851 630L921 657"/>
        <path class="mint" d="M490 706H1018"/>
        <path class="teal" d="M490 730.500H1018"/>
        <path class="yb" d="M1018 730H1067"/>
        <path class="sky" d="M1067 682H1628M1067 730.500H1628"/>
        <path class="brn" d="M1067 692H1628M1067 721H1628"/>
        <path class="blu" d="M490 779.500H1628"/>
        <path class="dtl" d="M872.500 731V779"/>
        <path class="gs2" d="M872.500 792V982M1067.500 792V982"/>
        <path class="tg" d="M490 974H1628"/>
        <path class="gs2" d="M884 962L865 982M1030 962L1013 982M1079 962L1060 982"/>
        <g class="grid">
          <rect class="grid-o" x="1221.500" y="654.500" width="98" height="75"/>
          <path d="M1229 654V730M1237 654V730M1245 654V730M1253 654V730M1261 654V730M1270 654V730M1278 654V730M1286 654V730M1294 654V730M1302 654V730M1311 654V730M1221 658H1320M1221 667H1320M1221 676H1320M1221 685H1320M1221 694H1320M1221 703H1320M1221 712H1320M1221 721H1320M1221 727H1320"/>
        </g>
        <path class="vg" d="M1270.500 163V982"/>
        <text class="ct" x="972" y="847" font-size="98" textLength="93" lengthAdjust="spacingAndGlyphs">100</text>
        <text class="ct" x="531" y="938" font-size="97" textLength="128" lengthAdjust="spacingAndGlyphs">1000</text>
        <text class="ct" x="865" y="938" font-size="97" textLength="106" lengthAdjust="spacingAndGlyphs">300</text>
        <text class="ct" x="1425" y="938" font-size="97" textLength="135" lengthAdjust="spacingAndGlyphs">1900</text>
        <path class="axy" d="M540 955V925"/>
        <path class="axyf" d="M540 922L545 937H535Z"/>
        <text class="axt gr" x="535" y="923" font-size="13">Y</text>
        <path class="axx" d="M540 955H560"/>
        <path class="axxf" d="M569 955L558 949V961Z"/>
        <ellipse class="axo" cx="540" cy="955" rx="5" ry="6"/>
        <text class="axt rd" x="571" y="961" font-size="13">X</text>
      </svg>

      <div class="float">
        <svg class="fi"><use href="#s-glob"/></svg>
        <svg class="fi"><use href="#s-3d"/></svg>
        <svg class="fi"><use href="#s-box"/></svg>
        <i class="car fc"></i>
        <svg class="fi"><use href="#s-boxb"/></svg>
        <i class="car fc"></i>
        <svg class="fi"><use href="#s-fr"/></svg>
        <svg class="fi"><use href="#s-cube"/></svg>
        <b class="fsep"></b>
        <svg class="fi"><use href="#s-eye"/></svg>
      </div>
      <span class="split"></span>
    </section>

    <aside class="right">
      <div class="strip"></div>
      <div class="ptitle pt-r">显示设置</div>
      <div class="rtabs"><a class="on">图元显示</a><a>楼层显示</a></div>
      <div class="rwrap">
        <table class="rtable">
          <colgroup><col class="rc1"><col class="rc2"><col class="rc3"></colgroup>
          <tr class="rh"><th>图层构件</th><th class="hl">显示图元</th><th>显示名称</th></tr>
          <tr><td class="t0"><i class="mb"></i>所有构件</td><td><i class="cb fl"></i></td><td><i class="cb"></i></td></tr>
          <tr><td class="t1"><i class="mb"></i>轴线</td><td><i class="cb"></i></td><td><i class="cb dis"></i></td></tr>
          <tr><td class="t2">轴网</td><td><i class="cb"></i></td><td><i class="cb dis"></i></td></tr>
          <tr><td class="t2">辅助轴线</td><td><i class="cb"></i></td><td><i class="cb dis"></i></td></tr>
          <tr><td class="t1"><i class="mb"></i>柱</td><td><i class="cb fl"></i></td><td><i class="cb"></i></td></tr>
          <tr><td class="t2">柱</td><td><i class="cb"></i></td><td><i class="cb"></i></td></tr>
          <tr><td class="t2">构造柱</td><td class="cur-cell"><i class="cb ck">✓</i></td><td><i class="cb"></i></td></tr>
          <tr><td class="t2">砌体柱</td><td><i class="cb"></i></td><td><i class="cb"></i></td></tr>
          <tr><td class="t2">约束边缘非阴...</td><td><i class="cb"></i></td><td><i class="cb"></i></td></tr>
          <tr><td class="t1"><i class="mb"></i>墙</td><td><i class="cb"></i></td><td><i class="cb"></i></td></tr>
          <tr><td class="t2">剪力墙</td><td><i class="cb"></i></td><td><i class="cb"></i></td></tr>
          <tr><td class="t2">人防门框墙</td><td><i class="cb"></i></td><td><i class="cb"></i></td></tr>
          <tr><td class="t2">砌体墙</td><td><i class="cb"></i></td><td><i class="cb"></i></td></tr>
          <tr><td class="t2">砌体加筋</td><td><i class="cb"></i></td><td><i class="cb"></i></td></tr>
          <tr><td class="t2">保温墙</td><td><i class="cb"></i></td><td><i class="cb"></i></td></tr>
          <tr><td class="t2">暗梁</td><td><i class="cb"></i></td><td><i class="cb"></i></td></tr>
          <tr><td class="t2">墙垛</td><td><i class="cb"></i></td><td><i class="cb"></i></td></tr>
          <tr><td class="t2">幕墙</td><td><i class="cb"></i></td><td><i class="cb"></i></td></tr>
          <tr><td class="t1"><i class="mb"></i>门窗洞</td><td><i class="cb"></i></td><td><i class="cb"></i></td></tr>
          <tr><td class="t2">门</td><td><i class="cb"></i></td><td><i class="cb"></i></td></tr>
          <tr><td class="t2">窗</td><td><i class="cb"></i></td><td><i class="cb"></i></td></tr>
          <tr><td class="t2">门联窗</td><td><i class="cb"></i></td><td><i class="cb"></i></td></tr>
          <tr><td class="t2">墙洞</td><td><i class="cb"></i></td><td><i class="cb"></i></td></tr>
          <tr><td class="t2">带形窗</td><td><i class="cb"></i></td><td><i class="cb"></i></td></tr>
          <tr><td class="t2">带形洞</td><td><i class="cb"></i></td><td><i class="cb"></i></td></tr>
          <tr><td class="t2">飘窗</td><td><i class="cb"></i></td><td><i class="cb"></i></td></tr>
          <tr><td class="t2">老虎窗</td><td><i class="cb"></i></td><td><i class="cb"></i></td></tr>
          <tr><td class="t2">过梁</td><td><i class="cb"></i></td><td><i class="cb"></i></td></tr>
          <tr><td class="t2">壁龛</td><td><i class="cb"></i></td><td><i class="cb"></i></td></tr>
          <tr><td class="t1"><i class="mb"></i>梁</td><td><i class="cb"></i></td><td><i class="cb"></i></td></tr>
          <tr><td class="t2">梁</td><td><i class="cb"></i></td><td><i class="cb"></i></td></tr>
          <tr><td class="t2">连梁</td><td><i class="cb"></i></td><td><i class="cb"></i></td></tr>
          <tr><td class="t2">圈梁</td><td><i class="cb"></i></td><td><i class="cb"></i></td></tr>
          <tr><td class="t1"><i class="mb"></i>板</td><td><i class="cb"></i></td><td><i class="cb"></i></td></tr>
          <tr><td class="t2"></td><td><i class="cb"></i></td><td><i class="cb"></i></td></tr>
        </table>
        <span class="rscroll"></span>
      </div>
      <div class="rbtn"><span>恢复默认设置</span></div>
    </aside>
  </main>

  <div class="dialog">
    <div class="dl-title"><span>错误 - 双击构件名称选择出错构件</span><i class="dl-max"></i><span class="dl-x">✕</span></div>
    <div class="dl-table">
      <div class="dl-head"><span class="c1">类型</span><span class="c2">构件名称</span><span class="c3">所属楼层</span><span class="c4">错误描述</span></div>
      <div class="dl-row"><span class="err">✕</span><span class="r1">错误</span><span class="r2">女儿墙构造柱</span><span class="r3">第20层</span><span class="r4">直筋长度的计算结果小于0，计算公式为[-1200+12.5...</span></div>
    </div>
    <span class="grip"></span>
  </div>
  <div class="tip">
    <div>解决方案:</div>
    <div>1、双击当前错误图元ID 138221，将【属性列表】 - 钢筋业务属性 - 计算设置，修改</div>
    <div>【是否属于砖混结构】，改为【是】，重新汇总计算即可</div>
  </div>
</div>
</body>
</html>
```
FILE: styles.css
```css
* { box-sizing: border-box; }
html, body { margin: 0; padding: 0; height: 100%; overflow: hidden; }
body { font: 12px/16px "Noto Sans CJK SC", "Liberation Sans", sans-serif; color: #3a3a3a; background: #fff; }
.sprite { position: absolute; width: 0; height: 0; }
.app { position: relative; width: 1900px; height: 982px; overflow: hidden; display: flex; flex-direction: column; }

.st1 { stop-color: #28b4f8; }
.st2 { stop-color: #1878f0; }
.ic { width: 15px; height: 15px; flex: none; fill: none; stroke: #5b6472; stroke-width: 1; }
.ic32 { width: 32px; height: 32px; flex: none; fill: none; stroke: #5b6472; }
.ic-sel { width: 22px; height: 28px; flex: none; }
.b { stroke: #1a7fe8; }
.bf { fill: #1a7fe8; stroke: none; }
.lf { fill: #c6defa; }
.bl { fill: #b7d5f7; stroke: #1a7fe8; }
.g { stroke: #bcbcbc; }
.k { fill: #3b4350; stroke: #3b4350; }
.r { stroke: #e03030; }
.ds { stroke: #4a5a70; }
.dbs { stroke: #1a6fd0; stroke-width: 1.500; }
.bfd { fill: #5b6472; stroke: none; }
.bw { stroke: #1a7fe8; stroke-width: 2.500; fill: none; }
.bg { stroke: #5b6472; stroke-width: 2.500; fill: none; }
.cur { fill: #a9cdf5; stroke: #1a7fe8; stroke-width: 2; }

.car { display: inline-block; width: 0; height: 0; border: 3px solid transparent; border-top: 4px solid #777; border-bottom: 0; flex: none; }
.car.lt { border-top-color: #c4c4c4; }
.car.m5 { margin-left: 6px; }

/* header */
.head { display: flex; height: 38px; border-bottom: 1px solid #ececec; flex: none; }
.logo { width: 42px; flex: none; }
.logo-svg { width: 42px; height: 38px; display: block; }
.logo-t { fill: url(#lg-logo); }
.logo-c { fill: #8a8a8a; }
.head-main { flex: 1; display: flex; flex-direction: column; min-width: 0; }
.qa { height: 17px; display: flex; overflow: hidden; }
.qa-icons { width: 378px; flex: none; display: flex; gap: 10px; padding-left: 5px; margin-top: -3px; align-items: flex-start; }
.qa-icons .ic { width: 16px; height: 16px; }
.qa-pair { display: flex; align-items: center; gap: 5px; height: 16px; margin-right: 1px; }
.qa-more { display: flex; flex-direction: column; align-items: center; margin-left: 4px; margin-top: 6px; gap: 2px; }
.qa-more b { width: 6px; height: 1px; background: #666; }
.title { flex: 1; text-align: center; color: #444; padding-right: 324px; line-height: 15px; white-space: nowrap; }
.win { width: 100px; flex: none; display: flex; align-items: center; position: relative; }
.w-min { width: 7px; height: 2px; background: #666; margin: 2px 0 0 18px; }
.w-res { width: 8px; height: 8px; border: 1px solid #666; margin-left: 29px; margin-top: -4px; }
.w-x { margin-left: 25px; font-size: 11px; color: #555; }
.tabbar { height: 20px; display: flex; align-items: center; }
.tabs { display: flex; width: 1374px; flex: none; }
.tabs a { padding: 0 13px; line-height: 19px; color: #444; white-space: nowrap; }
.tabs a.on { background: #2b90f6; color: #fff; border-radius: 10px; padding: 0 13px; margin: 0 -1px 0 0; }
.hsearch { width: 319px; height: 17px; border: 1px solid #e4e4e4; border-left-color: #444; border-radius: 2px; display: flex; justify-content: flex-end; align-items: center; overflow: hidden; position: relative; flex: none; }
.hs-text { white-space: nowrap; color: #222; margin-right: 33px; flex: none; }
.hs-ic { position: absolute; right: 6px; top: 1px; width: 13px; height: 13px; }
.avatar { width: 16px; height: 17px; margin-left: 6px; background: linear-gradient(160deg, #2b3338, #48555a 50%, #14181a); flex: none; }
.user { margin-left: 1px; color: #333; width: 60px; letter-spacing: .6px; flex: none; line-height: 17px; }
.h-i { width: 16px; height: 16px; margin-left: 4px; }
.help { margin-left: 10px; color: #555; font-size: 15px; display: flex; align-items: center; gap: 2px; width: 24px; }
.help .car { border-width: 2px; border-top-width: 3px; }
.h-s { width: 15px; height: 15px; margin-left: 3px; }
.collapse { width: 7px; height: 7px; border-left: 1px solid #555; border-top: 1px solid #555; transform: rotate(45deg); margin: 4px 0 0 4px; }

/* ribbon */
.ribbon { height: 97px; flex: none; display: flex; align-items: stretch; border-bottom: 2px solid #e4e4e4; }
.rg { position: relative; display: flex; flex-direction: column; flex: none; }
.rg::after { content: ""; position: absolute; right: 0; top: 2px; bottom: 3px; width: 1px; background: #d8d8d8; }
.g1 { width: 225px; }
.g2 { width: 194px; padding-left: 8px; }
.g3 { width: 276px; padding-left: 8px; }
.g4 { width: 237px; padding-left: 9px; }
.g5 { width: 67px; padding-left: 8px; }
.g6 { width: 369px; padding-left: 7px; }
.g7 { width: 78px; padding-left: 8px; }
.g8 { width: 114px; padding-left: 8px; }
.rb { height: 76px; display: flex; padding-top: 2px; flex: none; }
.rl { flex: none; height: 16px; display: flex; align-items: center; justify-content: center; color: #444; margin-top: 1px; }
.g1 .rl { padding-left: 2px; }
.col { display: flex; flex-direction: column; flex: none; }
.c98 { width: 98px; margin-left: 5px; }
.c79 { width: 79px; }
.c67 { width: 67px; }
.c112 { width: 112px; }
.c54 { width: 54px; }
.c62 { width: 62px; }
.c33 { width: 33px; }
.c97 { width: 97px; }
.ri { height: 23px; display: flex; align-items: center; gap: 4px; white-space: nowrap; color: #3a3a3a; }
.ri.dim { color: #b5b5b5; }
.bigsel { width: 40px; height: 67px; margin-top: 2px; background: #c3daf2; border-radius: 3px; display: flex; flex-direction: column; align-items: center; }
.bigsel .ic-sel { margin: 2px 2px 0 0; }
.bigsel span { margin-top: 6px; }
.bigb { display: flex; flex-direction: column; align-items: center; flex: none; white-space: nowrap; }
.bigb .ic32 { margin-top: 3px; }
.bigb span { margin-top: 4px; }
.w48 { width: 48px; margin-right: 7px; }
.w60 { width: 60px; margin-right: 10px; }
.w36 { width: 36px; margin-right: 8px; }
.bigb .car { margin-top: 3px; }
.bigb .car.low { margin-top: 6px; }

/* selector bar */
.selbar { height: 27px; flex: none; background: #f0f0f0; display: flex; align-items: center; gap: 3px; padding-top: 1px; }
.sel { height: 21px; background: #fff; border-radius: 3px; display: flex; align-items: center; justify-content: space-between; padding: 0 7px 0 3px; width: 99px; }
.s1 { width: 94px; padding-left: 0; }
.s1 span { margin-left: -3px; }
.sel .car { border-top-color: #555; }

/* main */
.main { flex: 1; min-height: 0; display: flex; background: #fbfbfb; }
.strip { height: 11px; background: #e6e6e6; border-top: 1px solid #dcdcdc; display: flex; justify-content: flex-end; align-items: center; flex: none; }
.sx { color: #aaa; font-size: 9px; line-height: 10px; margin-right: 4px; }
.ptitle { height: 23px; background: #f0f0f0; border-top: 1px solid #ddd; border-bottom: 1px solid #ddd; color: #888; padding-left: 1px; line-height: 21px; flex: none; }
.pt-r { padding-left: 9px; }

.nav { width: 202px; flex: none; background: #fff; display: flex; flex-direction: column; overflow: hidden; border-right: 1px solid #e4e4e4; margin-right: 4px; }
.ntool { height: 27px; flex: none; display: flex; align-items: center; border-bottom: 1px solid #ddd; padding-right: 1px; }
.pin { width: 10px; height: 10px; margin: 0 auto 0 1px; }
.ntb { width: 24px; height: 22px; background: #bcd9f7; border-radius: 3px; display: flex; align-items: center; justify-content: center; margin-left: 4px; }
.ntree { position: relative; flex: 1; padding-top: 3px; overflow: hidden; }
.ng { height: 24px; display: flex; align-items: center; padding-left: 16px; position: relative; color: #3a3a3a; }
.tri { position: absolute; width: 0; height: 0; border: solid transparent; }
.tri.r { left: 5px; top: 8px; border-width: 4px 0 4px 4px; border-left-color: #999; }
.tri.d { left: 3px; top: 10px; border-width: 4px 3px 0 3px; border-top-color: #999; border-left-width: 4px; border-right-width: 4px; }
.lk { width: 10px; height: 11px; margin-left: 3px; stroke: #555; }
.ni { height: 24px; display: flex; align-items: center; padding-left: 36px; gap: 7px; white-space: nowrap; margin: 0; position: relative; }
.ni.on { background: linear-gradient(#c2d9f1, #c2d9f1) 33px 1.500px / 140px 21px no-repeat; }
.nscroll { position: absolute; left: 190px; top: 17px; width: 8px; height: 333px; background: #c8c8c8; border-radius: 4px; }

.mid { width: 280px; flex: none; display: flex; flex-direction: column; margin-right: 4px; }
.mtop { height: 417px; flex: none; background: #fff; display: flex; flex-direction: column; border: 1px solid #d8d8d8; border-top: 0; }
.ptabs { height: 23px; flex: none; display: flex; background: #f0f0f0; border-bottom: 1px solid #d4d4d4; }
.ptabs a { width: 65px; text-align: center; line-height: 22px; color: #999; background: #e2e2e2; border-right: 1px solid #d4d4d4; }
.ptabs a.on { background: #f0f0f0; color: #333; font-weight: 700; border-top: 1px solid #d4d4d4; }
.mtool { height: 27px; flex: none; display: flex; align-items: center; border-bottom: 1px solid #ddd; position: relative; }
.mt { display: flex; align-items: center; gap: 6px; white-space: nowrap; flex: none; }
.mt .ic { width: 15px; height: 15px; }
.n1 { margin-left: 4px; width: 67px; }
.n2 { width: 57px; }
.n3 { width: 55px; }
.n4 { width: 82px; }
.more { position: absolute; right: 1px; top: 3px; width: 11px; height: 20px; border: 1px solid #eee; border-radius: 3px; display: flex; align-items: center; justify-content: center; }
.more i { width: 0; height: 0; border: solid transparent; border-width: 3px 0 3px 3px; border-left-color: #555; margin-right: 1px; }
.msearch { height: 19px; flex: none; border-bottom: 1px solid #ddd; display: flex; align-items: center; justify-content: space-between; padding: 0 7px 0 2px; color: #aaa; }
.msearch .ic { width: 12px; height: 12px; }
.mtree { flex: 1; padding-top: 4px; }
.mi { height: 24px; line-height: 24px; position: relative; white-space: nowrap; }
.l0 { padding-left: 23px; }
.l1 { padding-left: 43px; }
.l0 .tri { left: 13px; }
.l1 .tri { left: 33px; }
.l2 { padding-left: 63px; }
.mi.on { background: linear-gradient(#c2d9f1, #c2d9f1) 60px 1.500px / 100% 21px no-repeat; }
.mbot { flex: 1; display: flex; flex-direction: column; margin-top: 5px; background: #fff; position: relative; min-height: 0; }
.mbot .strip { border-top: 0; border-left: 1px solid #d8d8d8; border-right: 1px solid #d8d8d8; }
.ptable-wrap { position: relative; flex: none; height: 357px; border: 1px solid #d8d8d8; border-top: 0; overflow: hidden; }
.ptable { border-collapse: collapse; table-layout: fixed; width: 262px; }
.pc1 { width: 22px; }
.pc2 { width: 101px; }
.pc3 { width: 139px; }
.ptable th, .ptable td { height: 21px; padding: 0 3px; border: 1px solid #dcdcdc; border-top: 0; font-weight: 400; white-space: nowrap; overflow: hidden; line-height: 20px; }
.ptable .ph th { height: 20px; text-align: center; border-bottom: 1px solid #dcdcdc; }
.ptable th:first-child, .ptable td:first-child { border-left: 0; }
th.hl { background: #7cb7f7; color: #fff; }
.ptable .n { background: #f0f0f0; text-align: center; padding: 0; font-size: 12px; }
.ptable .k { color: #2b5fd9; }
.phi { position: relative; top: -2px; margin: 0 1px; font-size: 11px; }
.pscroll { position: absolute; left: 263px; top: 14px; width: 8px; height: 128px; background: #c8c8c8; border-radius: 4px; }
.mbtn { width: 80px; height: 8px; margin-left: 6px; margin-top: 3px; border: 1px solid #ddd; border-bottom: 0; border-radius: 3px 3px 0 0; background: #fff; }

.canvas { width: 1138px; flex: none; position: relative; margin-right: 4px; }
.cad { display: block; width: 1138px; height: 819px; }
.black { fill: #000; }
.dot { fill: #777; }
.yl, .yb, .ol, .zz, .lg, .dg, .mg, .gs, .gs2, .wl, .wh, .wt, .lg2, .mint, .teal, .sky, .brn, .blu, .dtl, .tg, .vg, .pu, .pu2, .rebar, .grid { fill: none; }
.yl { stroke: #c7b000; }
.yb { stroke: #efc800; stroke-width: 1.500; }
.ol { stroke: #8a8200; stroke-width: 1.500; }
.zz { stroke: #6b6b6b; }
.lg { stroke: #a0f0a0; }
.dg { stroke: #4f8d3c; stroke-width: 1.500; }
.mg { stroke: #74b05a; stroke-width: 1.500; }
.gs { stroke: #6dbf4a; }
.gs2 { stroke: #00c000; }
.wh { stroke: #eee; stroke-width: 1.500; }
.wl { stroke: #ddd; }
.wt { stroke: #777; }
.wr { fill: #fff; }
.arrow { fill: #00ee00; }
.rebar { stroke: #5a5ad8; }
.lg2 { stroke: #a8ee78; stroke-width: 1.200; }
.mint { stroke: #7df0a8; stroke-width: 1.200; }
.teal { stroke: #4fc08c; stroke-width: 1.200; }
.sky { stroke: #63b4dc; stroke-width: 1.500; }
.brn { stroke: #8a6a48; stroke-width: 2; }
.blu { stroke: #2090c8; stroke-width: 1.200; }
.dtl { stroke: #1b6f84; }
.tg { stroke: #008a00; stroke-width: 2; }
.vg { stroke: #00b400; }
.pu { stroke: #7a3f8c; stroke-width: 1.500; }
.pu2 { stroke: #9a5bb0; }
.grid { stroke: #4a8cf8; }
.grid-o { stroke: #6a9cff; stroke-width: 2.500; }
.ct { font-family: Roboto, Lato, "Liberation Sans", sans-serif; font-weight: 100; fill: #e8e8e8; stroke: #000; stroke-width: .5; }
.cc { font-family: "Noto Sans CJK SC", sans-serif; fill: #ddd; stroke: #000; stroke-width: 1.800; }
.cc.pk { fill: #ee70d0; stroke-width: 1.500; }
.axy { stroke: #00e000; stroke-width: 3; }
.axyf { fill: #00e000; }
.axx { stroke: #f00000; stroke-width: 5; }
.axxf { fill: #f00000; }
.axo { fill: #0000b0; }
.axt { font-family: "Liberation Sans", sans-serif; }
.gr { fill: #00d000; }
.rd { fill: #f00000; }

.float { position: absolute; right: 0; top: -1px; width: 33px; height: 245px; background: #fff; border-radius: 0 0 3px 3px; box-shadow: 0 1px 3px rgba(0,0,0,.4); display: flex; flex-direction: column; align-items: center; padding-top: 13px; }
.fi { width: 21px; height: 21px; flex: none; fill: none; stroke: #5b6472; margin-bottom: 8px; }
.fc { margin: -1px 0 6px; border-top-color: #666; border-left-width: 3px; border-right-width: 3px; }
.fsep { width: 23px; height: 1px; background: #888; margin: 0 0 6px; flex: none; }
.split { position: absolute; left: 100%; top: 370px; width: 4px; height: 101px; background: #6a7280; }

.right { flex: 1; min-width: 0; background: #fff; display: flex; flex-direction: column; overflow: hidden; }
.rtabs { height: 30px; flex: none; display: flex; gap: 4px; padding: 3px 0 0 4px; border-bottom: 0; position: relative; }
.rtabs a { width: 60px; height: 24px; line-height: 23px; text-align: center; background: #dcdcdc; color: #666; border-radius: 4px 4px 0 0; }
.rtabs a.on { background: #fff; color: #2b90f6; border: 1px solid #d8d8d8; border-bottom: 0; }
.rwrap { position: relative; height: 740px; flex: none; overflow: hidden; padding-left: 4px; border-bottom: 1px solid #ddd; }
.rtable { border-collapse: collapse; table-layout: fixed; width: 257px; }
.rc1 { width: 131px; }
.rc2, .rc3 { width: 63px; }
.rtable th, .rtable td { height: 21px; border-bottom: 1px solid #dcdcdc; border-right: 1px solid #dcdcdc; font-weight: 400; padding: 0; line-height: 20px; text-align: center; white-space: nowrap; position: relative; }
.rtable th { color: #3a3a3a; }
.rtable th.hl { color: #fff; }
.rtable td:first-child { text-align: left; border-left: 1px solid #e8e8e8; }
.t0 { padding-left: 21px !important; }
.t1 { padding-left: 31px !important; }
.t2 { padding-left: 41px !important; }
.t0 .mb { left: 2px; }
.t1 .mb { left: 12px; }
.mb { position: absolute; top: 4px; width: 13px; height: 12px; border: 1px solid #888; border-radius: 2px; background: linear-gradient(#666, #666) center / 5px 1px no-repeat #fff; }
.t2::before { content: ""; position: absolute; left: 18px; top: 0; bottom: 0; width: 17px; border-left: 1px solid #e2e2e2; background: linear-gradient(#e2e2e2, #e2e2e2) 0 10px / 100% 1px no-repeat; }
.cb { display: inline-block; width: 14px; height: 14px; border: 1px solid #8a8a8a; border-radius: 2px; vertical-align: middle; background: #fff; margin-top: -2px; font-style: normal; }
.cb.dis { background: #eee; border-color: #bbb; }
.cb.fl { background: #7ab5f5; box-shadow: inset 0 0 0 1px #fff; border-color: #5b6472; }
.cb.ck { background: #2f80e8; border-color: #2f80e8; color: #fff; font-size: 11px; line-height: 12px; font-weight: 700; }
.cur-cell { outline: 2px solid #808080; outline-offset: -2px; }
.rscroll { position: absolute; right: 0; top: 14px; width: 3px; height: 197px; background: #c8c8c8; border-radius: 3px 0 0 3px; }
.rbtn { margin: 6px 0 0 181px; height: 18px; border: 1px solid #ddd; border-radius: 4px 0 0 0; padding-left: 8px; color: #555; white-space: nowrap; line-height: 14px; }

/* dialog + tooltip */
.dialog { position: absolute; left: 402px; top: 350px; width: 502px; height: 279px; background: linear-gradient(90deg, #f6f6f6, #f2f2f2 15%, #e6e6e6 22%, #e6e6e6); box-shadow: 0 0 10px rgba(0,0,0,.25); padding: 0 12px; display: flex; flex-direction: column; border: 1px solid #ddd; }
.dl-title { height: 39px; flex: none; display: flex; align-items: center; font-size: 14px; color: #333; }
.dl-title span:first-child { margin-right: auto; }
.dl-max { width: 9px; height: 10px; border: 1px solid #666; margin-right: 17px; margin-top: -1px; }
.dl-x { font-size: 13px; color: #666; margin-right: -1px; }
.dl-table { height: 227px; flex: none; background: #fff; border: 1px solid #bdbdbd; }
.dl-head { height: 17px; display: flex; background: #f0f0f0; border-bottom: 1px solid #c8c8c8; line-height: 16px; }
.dl-head span { text-align: center; border-right: 1px solid #c8c8c8; white-space: nowrap; flex: none; }
.dl-head .c1 { width: 51px; }
.dl-head .c2 { width: 78px; }
.dl-head .c3 { width: 48px; }
.dl-head .c4 { flex: 1; border-right: 0; }
.dl-row { display: flex; align-items: center; height: 22px; white-space: nowrap; padding-left: 3px; }
.err { width: 15px; height: 15px; border-radius: 50%; background: #ab5478; color: #eedbe4; font-size: 9px; line-height: 15px; text-align: center; flex: none; margin-right: 7px; }
.r1 { width: 30px; flex: none; }
.r2 { width: 77px; flex: none; }
.r3 { width: 49px; flex: none; }
.grip { position: absolute; right: 2px; bottom: 2px; width: 8px; height: 8px; background: radial-gradient(circle, #777 1px, transparent 1.200px) 0 0 / 3px 3px; }
.tip { position: absolute; left: 687px; top: 439px; width: 464px; height: 54px; background: #fff; border: 1px solid #c8c8c8; box-shadow: 2px 2px 3px rgba(0,0,0,.35); padding: 2px 5px; line-height: 17px; color: #333; white-space: nowrap; letter-spacing: .3px; }
```
